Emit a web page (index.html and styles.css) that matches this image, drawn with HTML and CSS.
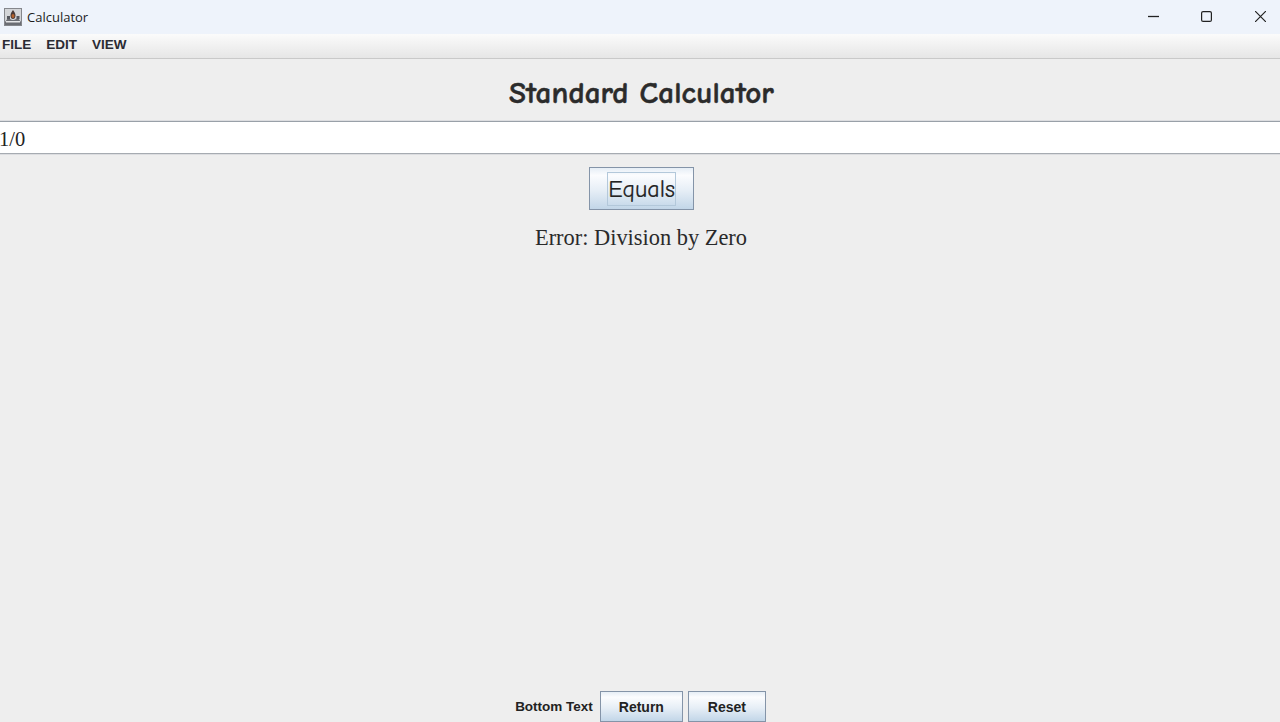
FILE: index.html
```html
<!DOCTYPE html>
<html lang="en">
<head>
<meta charset="utf-8">
<title>Calculator</title>
<link rel="stylesheet" href="styles.css">
</head>
<body>
<div class="window">
  <header class="titlebar">
    <svg class="app-icon" width="18" height="18" viewBox="0 0 18 18">
      <rect x="0.5" y="0.5" width="17" height="17" fill="#d3d5d8" stroke="#85878c"/>
      <path d="M1 14l3-4 4 2h2l4-2 3 4v3H1z" fill="#6b6d73"/>
      <path d="M2 13h14v1.500H2z" fill="#e4e5e7"/>
      <path d="M3 8h3v3H3zM12.500 8h3v3h-3z" fill="#55575e"/>
      <path d="M9 2c.8 1.200 2.500 3 2.500 5.500S10.200 11 9 11 6.500 10 6.500 7.500 8.200 3.200 9 2z" fill="#4a3a36"/>
      <ellipse cx="9" cy="8" rx="1.500" ry="2" fill="#b5622c"/>
    </svg>
    <span class="app-title">Calculator</span>
    <div class="win-controls">
      <svg class="win-btn" width="11" height="11" viewBox="0 0 11 11"><path d="M0 5.500h11" stroke="#222" stroke-width="1.300" fill="none"/></svg>
      <svg class="win-btn" width="11" height="11" viewBox="0 0 11 11"><rect x="0.600" y="0.600" width="9.800" height="9.800" rx="1.500" stroke="#222" stroke-width="1.200" fill="none"/></svg>
      <svg class="win-btn" width="11" height="11" viewBox="0 0 11 11"><path d="M0 0l11 11M11 0L0 11" stroke="#222" stroke-width="1.200" fill="none"/></svg>
    </div>
  </header>
  <nav class="menubar">
    <span class="menu-item">FILE</span>
    <span class="menu-item">EDIT</span>
    <span class="menu-item">VIEW</span>
  </nav>
  <main class="content">
    <h1 class="heading">Standard Calculator</h1>
    <div class="input-field">1/0</div>
    <div class="equals-row">
      <button class="equals-btn" type="button"><span class="equals-focus">Equals</span></button>
    </div>
    <p class="result">Error: Division by Zero</p>
  </main>
  <footer class="bottom">
    <span class="bottom-text">Bottom Text</span>
    <button class="small-btn return-btn" type="button">Return</button>
    <button class="small-btn reset-btn" type="button">Reset</button>
  </footer>
</div>
</body>
</html>
```
FILE: styles.css
```css
* { box-sizing: border-box; }
html, body { margin: 0; height: 100%; }
body { background: #eeeeee; overflow: hidden; }
.window { display: flex; flex-direction: column; height: 722px; }

.titlebar {
  height: 34px; flex: none; display: flex; align-items: center;
  background: #eef3fb; padding-left: 4px;
}
.app-icon { flex: none; }
.app-title { font: 13px "Open Sans", "Liberation Sans", sans-serif; color: #1c1c1c; margin-left: 5px; margin-top: -1px; }
.win-controls { margin-left: auto; display: flex; margin-right: 14px; gap: 42px; }
.win-btn { display: block; margin-top: -2px; }
.win-btn:last-child { margin-left: 1px; }

.menubar {
  height: 25px; flex: none; display: flex; align-items: center;
  padding: 0 0 3px 2px; gap: 15px;
  background: linear-gradient(#fbfbfb, #e6e6e6);
  border-bottom: 1px solid #c9c9c9;
  font: bold 13.500px "Liberation Sans", sans-serif; color: #2b2b33;
}

.content { flex: 1; display: flex; flex-direction: column; align-items: stretch; }
.heading {
  margin: 0; height: 62px; display: flex; align-items: center; justify-content: center;
  padding: 6px 0 0 3px;
  font: bold 31px "Comic Sans MS", "Comic Neue", cursive; color: #2b2b2b;
  letter-spacing: 0.100px;
  -webkit-text-stroke: 0.500px #2b2b2b;
}
.input-field {
  height: 33px; background: #fff;
  border-top: 1px solid #99a0a8; border-bottom: 1px solid #a6abb1;
  box-shadow: 0 -1px 0 #dcdde0, 0 1px 0 #dcdde0;
  font: 20.500px/34px "Liberation Serif", serif; color: #222;
  text-indent: -1px;
}
.equals-row { display: flex; justify-content: center; margin-top: 13px; padding-left: 2px; }
.equals-btn {
  width: 105px; height: 43px; padding: 0 0 0 1px; display: flex; align-items: center; justify-content: center;
  border: 1px solid #8494a8;
  background: linear-gradient(#e6eef6 0%, #fbfcfe 18%, #e6eef6 55%, #c2d6e8 100%);
}
.equals-focus {
  width: 69px; height: 34px; display: block; text-align: center;
  border: 1px solid #b3c8da;
  font: 24px/33px "Comic Sans MS", "Comic Neue", cursive; color: #222;
  -webkit-text-stroke: 0.200px #222;
}
.result {
  margin: 11px 0 0; padding-left: 2px; text-align: center;
  font: 22.400px/33px "Liberation Serif", serif; color: #2a2a2a;
}

.bottom {
  height: 31px; flex: none; display: flex; align-items: center; justify-content: center;
  padding-left: 1px;
  font: bold 14px "Liberation Sans", sans-serif; color: #222;
}
.bottom-text { margin-right: 7px; font-size: 13.500px; }
.small-btn {
  height: 31px; padding: 0;
  border: 1px solid #8494a8;
  background: linear-gradient(#e6eef6 0%, #fbfcfe 18%, #e6eef6 55%, #c2d6e8 100%);
  font: bold 14px "Liberation Sans", sans-serif; color: #222;
}
.return-btn { width: 83px; margin-right: 5px; }
.reset-btn { width: 78px; }
```
